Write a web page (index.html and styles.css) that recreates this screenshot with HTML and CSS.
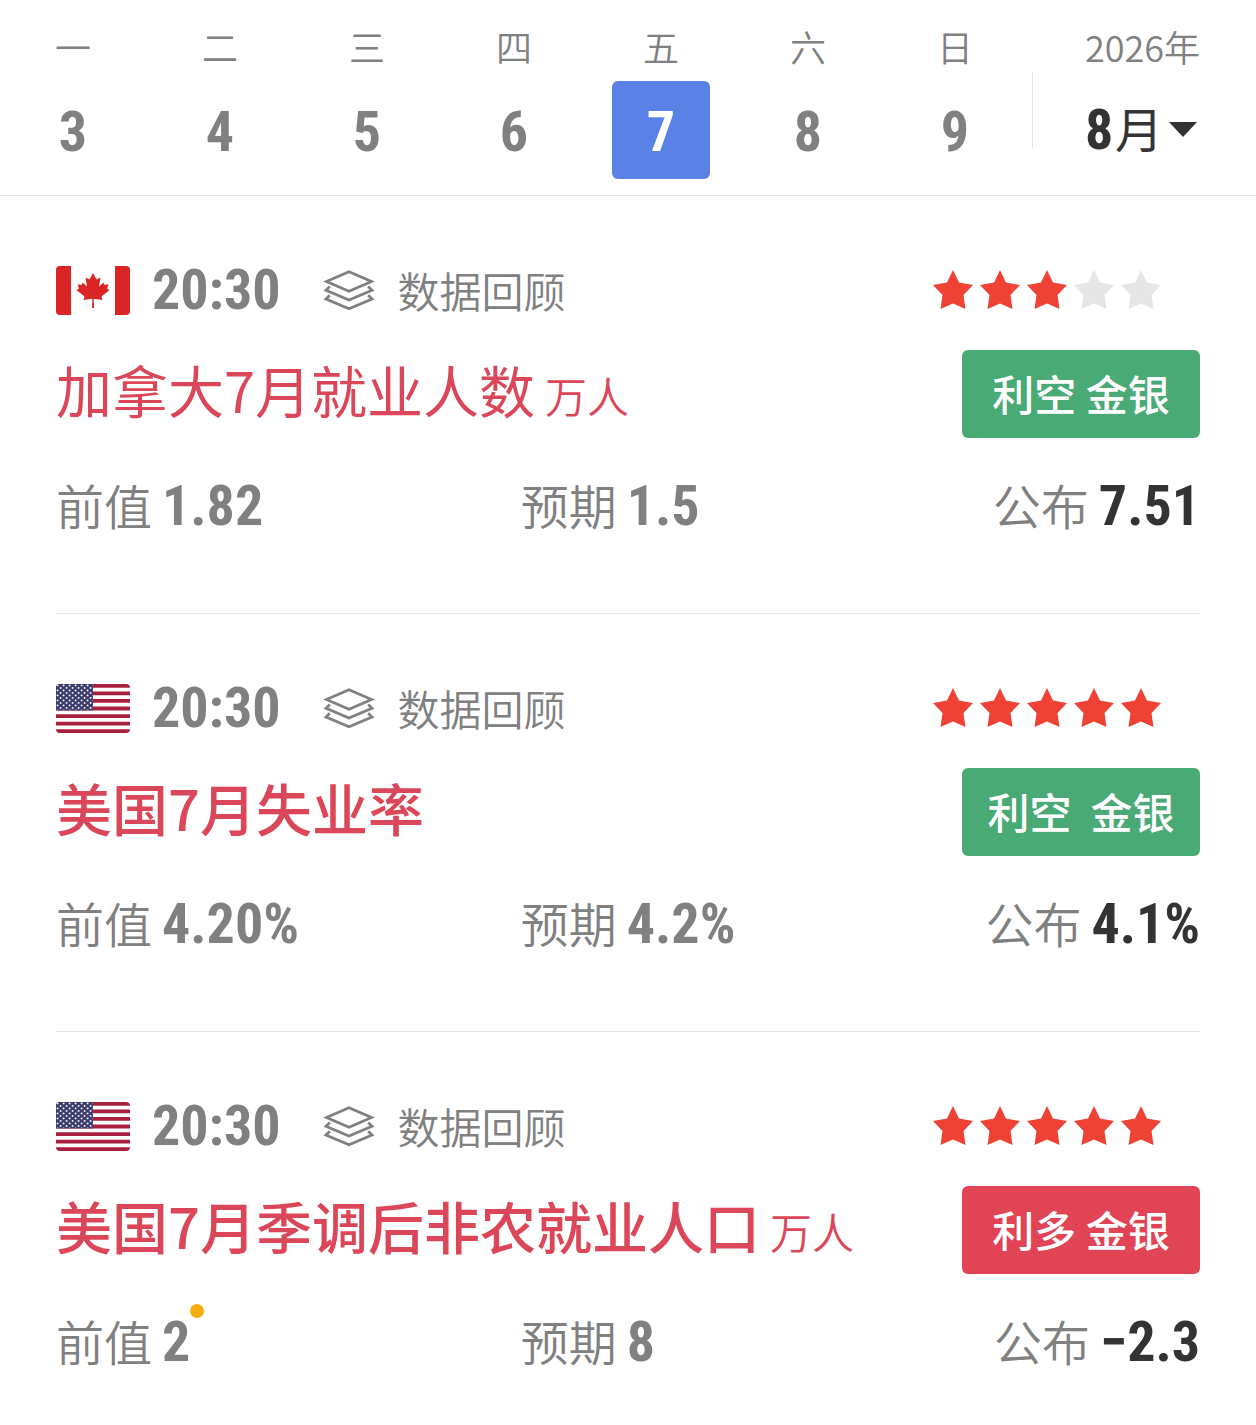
FILE: index.html
```html
<!DOCTYPE html>
<html lang="zh-CN">
<head>
  <meta charset="utf-8">
  <meta name="viewport" content="width=device-width, initial-scale=1">
  <title>财经日历</title>
  <link rel="stylesheet" href="styles.css">
</head>
<body>
  <!-- Shared icons -->
  <svg class="sprite" width="0" height="0" aria-hidden="true">
    <defs>
      <pattern id="us-stars" width="6" height="5" patternUnits="userSpaceOnUse">
        <circle cx="1.6" cy="1.4" r="0.95" fill="#ffffff"/>
        <circle cx="4.6" cy="3.9" r="0.95" fill="#ffffff"/>
      </pattern>
    </defs>
    <symbol id="star" viewBox="0 0 40 40">
      <path d="M20 0 L26 12.500 L40 15 L30.500 25 L32.500 39 L20 33.500 L7.500 39 L9.500 25 L0 15 L14 12.500 Z"/>
    </symbol>
    <symbol id="layers" viewBox="0 0 52 41">
      <g fill="none" stroke="currentColor" stroke-width="2.8">
        <path d="M3.500 11.500 L26 1.800 L48.500 11.500 L26 21.200 Z"/>
        <path d="M6.800 16.500 L3 20.200 L26 30 L49 20.200 L45.200 16.500"/>
        <path d="M6.800 25.300 L3 29 L26 38.800 L49 29 L45.200 25.300"/>
      </g>
    </symbol>
    <symbol id="flag-ca" viewBox="0 0 74 49">
      <rect width="74" height="49" fill="#ffffff"/>
      <rect width="15" height="49" fill="#d92525"/>
      <rect x="59" width="15" height="49" fill="#d92525"/>
      <path fill="#d92525" d="M37 7 L40.500 13.500 L44.500 11.500 L43 20.500 L47.500 16.500 L48.500 19 L52.500 18.300 L51 22.500 L53.500 24 L45.500 30.500 L46.500 34 L37.700 32.800 L38 42 L36 42 L36.300 32.800 L27.500 34 L28.500 30.500 L20.500 24 L23 22.500 L21.500 18.300 L25.500 19 L26.500 16.500 L31 20.500 L29.500 11.500 L33.500 13.500 Z"/>
    </symbol>
    <symbol id="flag-us" viewBox="0 0 74 49">
      <rect width="74" height="49" fill="#ffffff"/>
      <path stroke="#a9203e" stroke-width="3.770" d="M0 1.880H74 M0 9.420H74 M0 16.960H74 M0 24.500H74 M0 32.040H74 M0 39.580H74 M0 47.120H74"/>
      <rect width="37" height="26.400" fill="#3c3b6e"/>
      <rect width="37" height="26" fill="url(#us-stars)"/>
    </symbol>
  </svg>

  <header class="calendar">
    <div class="days">
      <div class="day"><span class="weekday">一</span><button class="date" type="button">3</button></div>
      <div class="day"><span class="weekday">二</span><button class="date" type="button">4</button></div>
      <div class="day"><span class="weekday">三</span><button class="date" type="button">5</button></div>
      <div class="day"><span class="weekday">四</span><button class="date" type="button">6</button></div>
      <div class="day"><span class="weekday">五</span><button class="date active" type="button">7</button></div>
      <div class="day"><span class="weekday">六</span><button class="date" type="button">8</button></div>
      <div class="day"><span class="weekday">日</span><button class="date" type="button">9</button></div>
    </div>
    <div class="divider"></div>
    <div class="month">
      <span class="year">2026年</span>
      <div class="month-picker">
        <select id="month-select">
          <option>1</option>
          <option>2</option>
          <option>3</option>
          <option>4</option>
          <option>5</option>
          <option>6</option>
          <option>7</option>
          <option selected>8</option>
          <option>9</option>
          <option>10</option>
          <option>11</option>
          <option>12</option>
        </select>
        <label for="month-select">月</label>
        <svg class="caret" viewBox="0 0 28 16" aria-hidden="true"><path d="M0 0H28L14 15Z"/></svg>
      </div>
    </div>
  </header>

  <main class="events">
    <article class="event">
      <div class="event-top">
        <svg class="flag" role="img" aria-label="加拿大"><use href="#flag-ca"/></svg>
        <time class="time">20:30</time>
        <a class="review" href="#"><svg class="layers" aria-hidden="true"><use href="#layers"/></svg>数据回顾</a>
        <div class="stars">
          <svg class="star"><use href="#star"/></svg>
          <svg class="star"><use href="#star"/></svg>
          <svg class="star"><use href="#star"/></svg>
          <svg class="star off"><use href="#star"/></svg>
          <svg class="star off"><use href="#star"/></svg>
        </div>
      </div>
      <div class="event-main">
        <h2 class="title">加拿大7月就业人数<small>万人</small></h2>
        <span class="badge down">利空 金银</span>
      </div>
      <div class="values">
        <div class="value">前值<b>1.82</b></div>
        <div class="value">预期<b>1.5</b></div>
        <div class="value actual">公布<b>7.51</b></div>
      </div>
    </article>

    <article class="event">
      <div class="event-top">
        <svg class="flag" role="img" aria-label="美国"><use href="#flag-us"/></svg>
        <time class="time">20:30</time>
        <a class="review" href="#"><svg class="layers" aria-hidden="true"><use href="#layers"/></svg>数据回顾</a>
        <div class="stars">
          <svg class="star"><use href="#star"/></svg>
          <svg class="star"><use href="#star"/></svg>
          <svg class="star"><use href="#star"/></svg>
          <svg class="star"><use href="#star"/></svg>
          <svg class="star"><use href="#star"/></svg>
        </div>
      </div>
      <div class="event-main">
        <h2 class="title important">美国7月失业率</h2>
        <span class="badge down">利空&nbsp; 金银</span>
      </div>
      <div class="values">
        <div class="value">前值<b>4.20%</b></div>
        <div class="value">预期<b>4.2%</b></div>
        <div class="value actual">公布<b>4.1%</b></div>
      </div>
    </article>

    <article class="event">
      <div class="event-top">
        <svg class="flag" role="img" aria-label="美国"><use href="#flag-us"/></svg>
        <time class="time">20:30</time>
        <a class="review" href="#"><svg class="layers" aria-hidden="true"><use href="#layers"/></svg>数据回顾</a>
        <div class="stars">
          <svg class="star"><use href="#star"/></svg>
          <svg class="star"><use href="#star"/></svg>
          <svg class="star"><use href="#star"/></svg>
          <svg class="star"><use href="#star"/></svg>
          <svg class="star"><use href="#star"/></svg>
        </div>
      </div>
      <div class="event-main">
        <h2 class="title important">美国7月季调后非农就业人口<small>万人</small></h2>
        <span class="badge up">利多 金银</span>
      </div>
      <div class="values">
        <div class="value">前值<b class="revised">2</b></div>
        <div class="value">预期<b>8</b></div>
        <div class="value actual">公布<b>−2.3</b></div>
      </div>
    </article>
  </main>
</body>
</html>
```
FILE: styles.css
```css
* {
  box-sizing: border-box;
}

body {
  margin: 0;
  background-color: #ffffff;
  color: #808080;
  font-family: "Noto Sans CJK SC", sans-serif;
  font-weight: 350;
}

.sprite {
  position: absolute;
}

/* Calendar header */
.calendar {
  display: flex;
  padding: 28px 56px 16px 24px;
  border-bottom: 1px solid #e4e4e4;
}

.days {
  display: flex;
  flex: 1;
  justify-content: space-between;
}

.day {
  display: flex;
  flex-direction: column;
  align-items: center;
  gap: 17px;
}

.weekday, .year {
  font-size: 36px;
  line-height: 36px;
  white-space: nowrap;
}

.date {
  width: 98px;
  height: 98px;
  padding: 4px 0 0;
  border: none;
  border-radius: 6px;
  background: none;
  color: #808080;
  font-family: "Roboto Condensed", "Roboto", sans-serif;
  font-size: 56px;
  font-weight: 700;
  cursor: pointer;
}

.date.active {
  background-color: #5981e6;
  color: #ffffff;
}

.divider {
  width: 1px;
  height: 76px;
  margin: 44px 52px 0 28px;
  background-color: #e4e4e4;
}

.month {
  display: flex;
  flex-direction: column;
  gap: 17px;
  width: 115px;
}

.month-picker {
  display: flex;
  align-items: center;
  height: 98px;
  color: #333333;
  font-size: 48px;
  font-weight: 400;
}

.month-picker select {
  appearance: none;
  width: 30px;
  padding: 0;
  border: none;
  background: none;
  color: #333333;
  font-family: "Roboto Condensed", "Roboto", sans-serif;
  font-size: 56px;
  font-weight: 700;
}

.month-picker label {
  padding-bottom: 6px;
}

.caret {
  width: 28px;
  height: 16px;
  margin-left: 6px;
  fill: #333333;
}

/* Event list */
.events {
  padding: 0 56px;
}

.event {
  padding: 64px 0 77px;
  border-bottom: 1px solid #e4e4e4;
}

.event:last-child {
  padding-bottom: 40px;
  border-bottom: none;
}

.event-top {
  display: flex;
  align-items: center;
  height: 60px;
}

.flag {
  width: 74px;
  height: 49px;
  border-radius: 4px;
}

.time {
  margin-left: 22px;
  font-family: "Roboto Condensed", "Roboto", sans-serif;
  font-size: 56px;
  font-weight: 700;
}

.review {
  display: flex;
  align-items: center;
  margin-left: 42px;
  color: #808080;
  font-size: 42px;
  line-height: 60px;
  text-decoration: none;
}

.layers {
  width: 52px;
  height: 41px;
  margin-right: 23px;
}

.stars {
  display: flex;
  gap: 7px;
  margin-left: auto;
  padding-right: 39px;
}

.star {
  width: 40px;
  height: 40px;
  fill: #ee4235;
}

.star.off {
  fill: #e6e6e6;
}

.event-main {
  display: flex;
  align-items: flex-start;
  justify-content: space-between;
  margin-top: 30px;
}

.title {
  margin: 0;
  color: #db4759;
  font-size: 56px;
  font-weight: 400;
  line-height: 78px;
}

.title.important {
  font-weight: 500;
}

.title small {
  margin-left: 10px;
  font-size: 42px;
  font-weight: 350;
  line-height: 1;
}

.badge {
  width: 238px;
  padding-bottom: 2px;
  border-radius: 6px;
  color: #ffffff;
  font-size: 42px;
  font-weight: 500;
  line-height: 86px;
  text-align: center;
}

.badge.down {
  background-color: #4aaa75;
}

.badge.up {
  background-color: #e04455;
}

.values {
  display: grid;
  grid-template-columns: 13fr 9fr 10fr;
  margin-top: 38px;
}

.value {
  padding-bottom: 4px;
  font-size: 48px;
  line-height: 56px;
  white-space: nowrap;
}

.value b {
  position: relative;
  margin-left: 10px;
  font-family: "Roboto Condensed", "Roboto", sans-serif;
  font-size: 56px;
  font-weight: 700;
  line-height: 40px;
}

.value.actual {
  text-align: right;
}

.value.actual b {
  color: #333333;
}

/* Marks a revised previous value */
.revised::after {
  content: "";
  position: absolute;
  top: -5px;
  left: 100%;
  width: 14px;
  height: 14px;
  border-radius: 50%;
  background-color: #f5ad0f;
}
```
